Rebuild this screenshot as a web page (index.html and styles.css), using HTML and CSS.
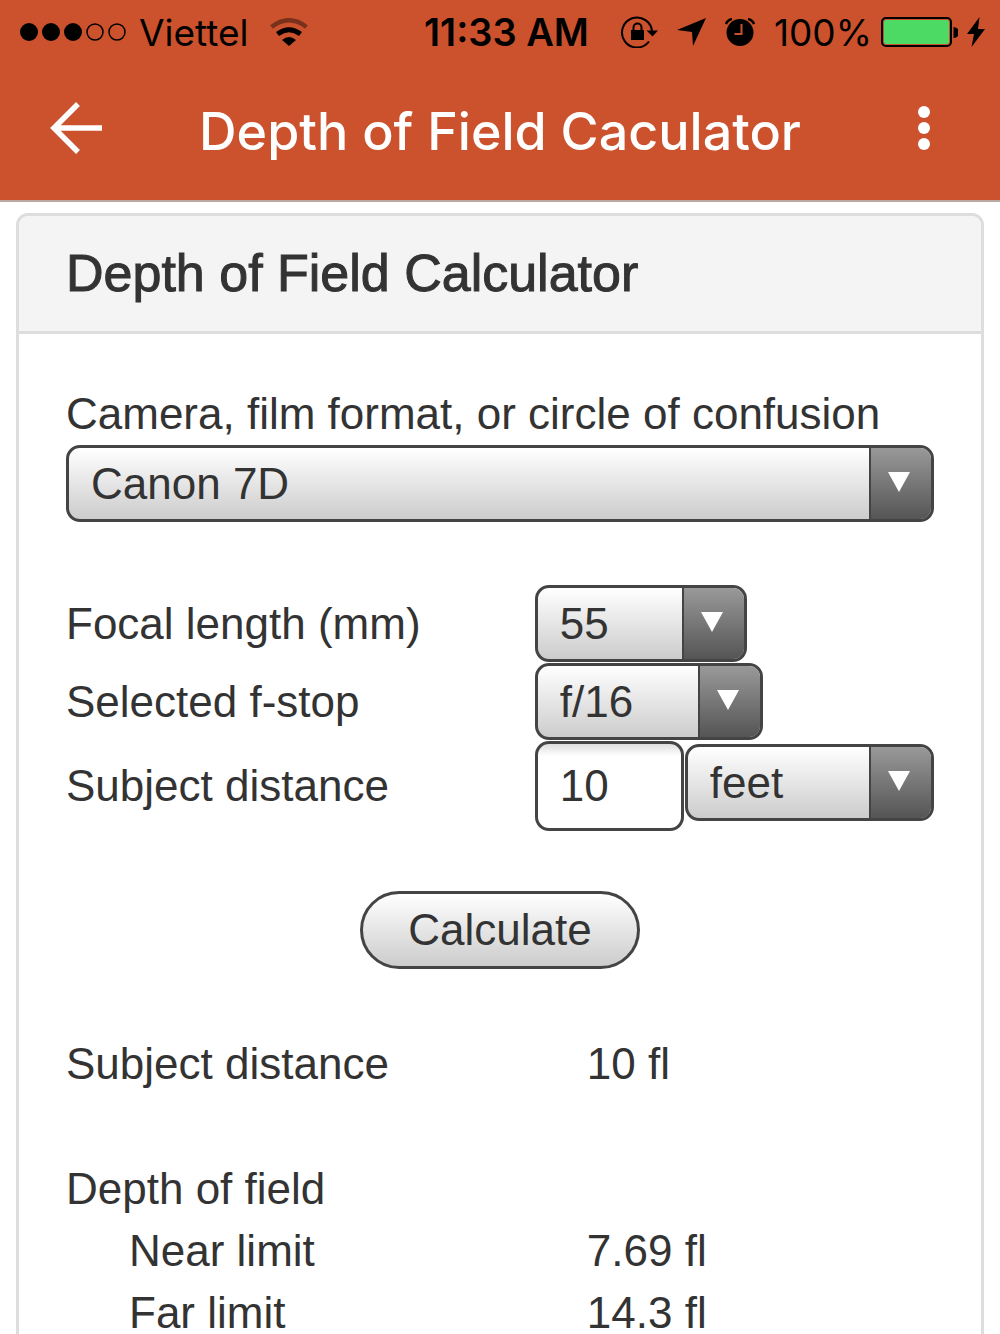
FILE: index.html
```html
<!DOCTYPE html>
<html lang="en">
<head>
  <meta charset="UTF-8">
  <meta name="viewport" content="width=device-width, initial-scale=1">
  <title>Depth of Field Calculator</title>
  <link rel="stylesheet" href="styles.css">
</head>
<body>
  <header class="top">
    <div class="status">
      <div class="status-left">
        <svg width="106" height="20" viewBox="0 0 106 20">
          <circle cx="9" cy="10" r="9"/>
          <circle cx="31" cy="10" r="9"/>
          <circle cx="53" cy="10" r="9"/>
          <circle cx="75" cy="10" r="8" fill="none" stroke="#000" stroke-width="1.5"/>
          <circle cx="97" cy="10" r="8" fill="none" stroke="#000" stroke-width="1.5"/>
        </svg>
        <span>Viettel</span>
        <svg class="wifi" width="38" height="28" viewBox="0 0 38 28" fill="none" stroke="#000" stroke-width="4.5">
          <path d="M1.5 9Q19 -4.5 36.5 9" opacity=".4"/>
          <path d="M7.500 16Q19 7.500 30.500 16" stroke-width="5"/>
          <path d="M19 28L12 22Q19 16 26 22Z" fill="#000" stroke="none"/>
        </svg>
      </div>
      <div class="status-time">11:33 AM</div>
      <div class="status-right">
        <svg width="37" height="32" viewBox="0 0 37 32">
          <path d="M28 25.500A15 15 0 1 1 31 16" fill="none" stroke="#000" stroke-width="2"/>
          <path d="M25.500 14.500H37L31.500 20.500Z"/>
          <rect x="10" y="14" width="13" height="10"/>
          <path d="M12.500 14V11.500a4 4 0 0 1 8 0V14" fill="none" stroke="#000" stroke-width="2"/>
        </svg>
        <svg width="29" height="28" viewBox="0 0 29 28">
          <path d="M29 0L16 28L15 14L0 12Z"/>
        </svg>
        <svg width="30" height="28" viewBox="0 0 30 28">
          <circle cx="15" cy="14.500" r="13.500"/>
          <path d="M1 6Q2.500 2 7 1M29 6Q27.500 2 23 1" fill="none" stroke="#000" stroke-width="2.500"/>
          <path d="M16.500 6V16H9.500" fill="none" stroke="#cc522d" stroke-width="2"/>
        </svg>
        <span>100%</span>
        <svg class="battery" width="77" height="30" viewBox="0 0 77 30">
          <rect x="1" y="1" width="69" height="28" rx="4" fill="none" stroke="#000" stroke-width="2"/>
          <rect x="3" y="3" width="65" height="24" rx="2" fill="#4cd964"/>
          <path d="M72.500 10a5 5 0 0 1 0 11Z"/>
        </svg>
        <svg width="18" height="30" viewBox="0 0 18 30">
          <path d="M12.500 0L0 17H7L4.500 30L18 12H11Z"/>
        </svg>
      </div>
    </div>
    <div class="appbar">
      <button type="button" class="icon-btn" aria-label="Back">
        <svg width="52" height="52" viewBox="0 0 52 52" fill="none" stroke="#fff" stroke-width="5.5">
          <path d="M28 2L4 26L28 50M4 26H52"/>
        </svg>
      </button>
      <div class="appbar-title">Depth of Field Caculator</div>
      <button type="button" class="icon-btn" aria-label="More">
        <svg width="52" height="52" viewBox="0 0 52 52" fill="#fff">
          <circle cx="26" cy="10" r="6"/>
          <circle cx="26" cy="26" r="6"/>
          <circle cx="26" cy="42" r="6"/>
        </svg>
      </button>
    </div>
  </header>

  <main class="card">
    <h1>Depth of Field Calculator</h1>
    <form id="dofForm" class="card-body">
      <label for="camera" class="camera-label">Camera, film format, or circle of confusion</label>
      <div class="select">
        <select id="camera" name="camera">
          <option>Canon 7D</option>
        </select>
      </div>

      <div class="fields">
        <div class="row">
          <label for="focal">Focal length (mm)</label>
          <div class="select focal">
            <select id="focal" name="focal">
              <option>55</option>
            </select>
          </div>
        </div>
        <div class="row">
          <label for="fstop">Selected f-stop</label>
          <div class="select fstop">
            <select id="fstop" name="fstop">
              <option>f/16</option>
            </select>
          </div>
        </div>
        <div class="row">
          <label for="distance">Subject distance</label>
          <input type="text" id="distance" name="distance" value="10">
          <div class="select units">
            <select id="units" name="units" aria-label="Units">
              <option>feet</option>
            </select>
          </div>
        </div>
      </div>

      <button type="submit" class="calculate">Calculate</button>

      <table class="results">
        <tr class="spaced"><th scope="row">Subject distance</th><td>10 fl</td></tr>
        <tr><th scope="row">Depth of field</th><td></td></tr>
        <tr class="sub"><th scope="row">Near limit</th><td>7.69 fl</td></tr>
        <tr class="sub"><th scope="row">Far limit</th><td>14.3 fl</td></tr>
      </table>
    </form>
  </main>
  <script>
    document.getElementById('dofForm').addEventListener('submit', function(e) {
      e.preventDefault();
    });
  </script>
</body>
</html>
```
FILE: styles.css
```css
* { box-sizing: border-box; }
body {
  margin: 0;
  height: 100vh;
  overflow: hidden;
  background: #fff;
  color: #333;
  font-family: "Liberation Sans", Arial, sans-serif;
  font-size: 44px;
}
svg { display: block; flex: none; }

/* header */
.top { background: #cc522d; border-bottom: 2px solid #b9a9a2; font-family: Inter, sans-serif; }
.status {
  display: grid;
  grid-template-columns: 1fr auto 1fr;
  align-items: center;
  height: 64px;
  padding: 0 15px 0 20px;
  color: #000;
  font-size: 37px;
}
.status-left, .status-right { display: flex; align-items: center; }
.status-left { gap: 13px; }
.status-right { justify-content: flex-end; gap: 19px; }
.status-time { padding-left: 8px; font-size: 38px; font-weight: 600; }
.wifi { margin-left: 8px; }
.battery { margin: 0 -10px; }
.appbar { display: flex; align-items: center; justify-content: space-between; height: 136px; padding: 0 50px 8px; }
.appbar-title { padding-top: 6px; color: #fff; font-size: 52px; font-weight: 500; }
.icon-btn { padding: 0; border: 0; background: none; cursor: pointer; }

/* card */
.card { margin: 11px 16px 0; border: 3px solid #ddd; border-radius: 12px; }
.card h1 {
  margin: 0;
  padding: 0 47px;
  border-bottom: 3px solid #ddd;
  border-radius: 9px 9px 0 0;
  background: #f4f4f4;
  font-size: 52px;
  font-weight: normal;
  line-height: 115px;
  -webkit-text-stroke: 1px #333;
}
.card-body { padding: 52px 47px 0; }
.camera-label { display: block; padding-bottom: 3px; line-height: 56px; }

/* form controls */
select, input, .calculate { color: #333; font-family: inherit; font-size: 44px; }
.select { position: relative; height: 77px; }
.select select {
  appearance: none;
  width: 100%;
  height: 100%;
  padding: 0 68px 0 22px;
  border: 3px solid #444;
  border-radius: 14px;
  background: linear-gradient(#fff, #ccc);
}
.select::before {
  content: "";
  position: absolute;
  top: 3px;
  right: 3px;
  bottom: 3px;
  width: 60px;
  border-left: 2px solid #444;
  border-radius: 0 11px 11px 0;
  background: linear-gradient(#999, #555);
  pointer-events: none;
}
.select::after {
  content: "";
  position: absolute;
  top: 27px;
  right: 24px;
  border: 11px solid transparent;
  border-top: 20px solid #fff;
  border-bottom: 0;
  pointer-events: none;
}
.fields { display: flex; flex-direction: column; gap: 1px; margin-top: 63px; }
.row { display: flex; align-items: center; }
.row label { width: 54%; }
.focal { width: 212px; }
.fstop { width: 228px; }
.units { flex: 1; align-self: flex-start; margin: 3px 0 0 1px; }
.row input {
  width: 149px;
  height: 90px;
  padding: 0 22px;
  border: 3px solid #444;
  border-radius: 14px;
  background: linear-gradient(#ddd, #fff 12px);
}
.calculate {
  display: block;
  height: 78px;
  margin: 60px auto 0;
  padding: 0 45px;
  border: 3px solid #444;
  border-radius: 39px;
  background: linear-gradient(#fff, #ccc);
}

/* results */
.results { width: 100%; margin-top: 64px; border-collapse: collapse; line-height: 62px; }
.results th { width: 60%; padding: 0; font-weight: normal; text-align: left; }
.results td { padding: 0; }
.results .spaced th, .results .spaced td { padding-bottom: 63px; }
.results .sub th { padding-left: 63px; }
```
